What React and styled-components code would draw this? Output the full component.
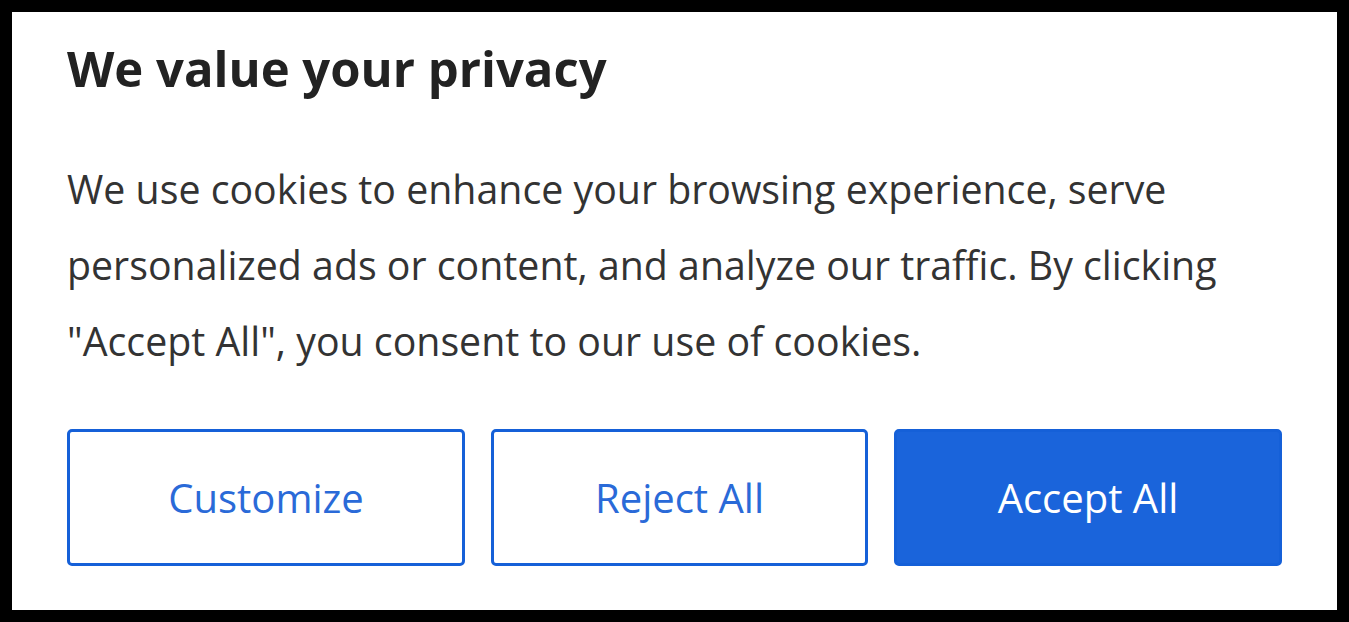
import React from "react";
import styled, { createGlobalStyle } from "styled-components";

const Global = createGlobalStyle`
  html, body { margin: 0; padding: 0; background: #000; }
  body { font-family: "Open Sans", "Noto Sans", "Liberation Sans", sans-serif; }
  * { box-sizing: border-box; }
`;

const Page = styled.div`
  background: #000;
  padding: 12px;
  min-height: 622px;
`;

const Panel = styled.section`
  background: #fff;
  padding: 28px 56px 45px 55px;
  height: 598px;
`;

const Title = styled.h1`
  margin: 0;
  font-size: 49px;
  line-height: 56px;
  font-weight: 700;
  color: #222;
`;

const Body = styled.p`
  margin: 55px 0 0;
  font-size: 39.3px;
  line-height: 76px;
  color: #333;
`;

const Actions = styled.div`
  display: grid;
  grid-template-columns: 398px 377px 388px;
  gap: 26px;
  margin-top: 50px;
`;

const Button = styled.button`
  height: 137px;
  border-radius: 5px;
  font-family: inherit;
  font-size: 40px;
  cursor: pointer;
  border: 3px solid #1560d8;
  background: ${(p) => (p.$primary ? "#1a64db" : "#fff")};
  color: ${(p) => (p.$primary ? "#fff" : "#2a6ad8")};
`;

export default function App() {
  return (
    <>
      <Global />
      <Page>
        <Panel>
          <Title>We value your privacy</Title>
          <Body>
            We use cookies to enhance your browsing experience, serve
            <br />
            personalized ads or content, and analyze our traffic. By clicking
            <br />
            "Accept All", you consent to our use of cookies.
          </Body>
          <Actions>
            <Button>Customize</Button>
            <Button>Reject All</Button>
            <Button $primary>Accept All</Button>
          </Actions>
        </Panel>
      </Page>
    </>
  );
}
